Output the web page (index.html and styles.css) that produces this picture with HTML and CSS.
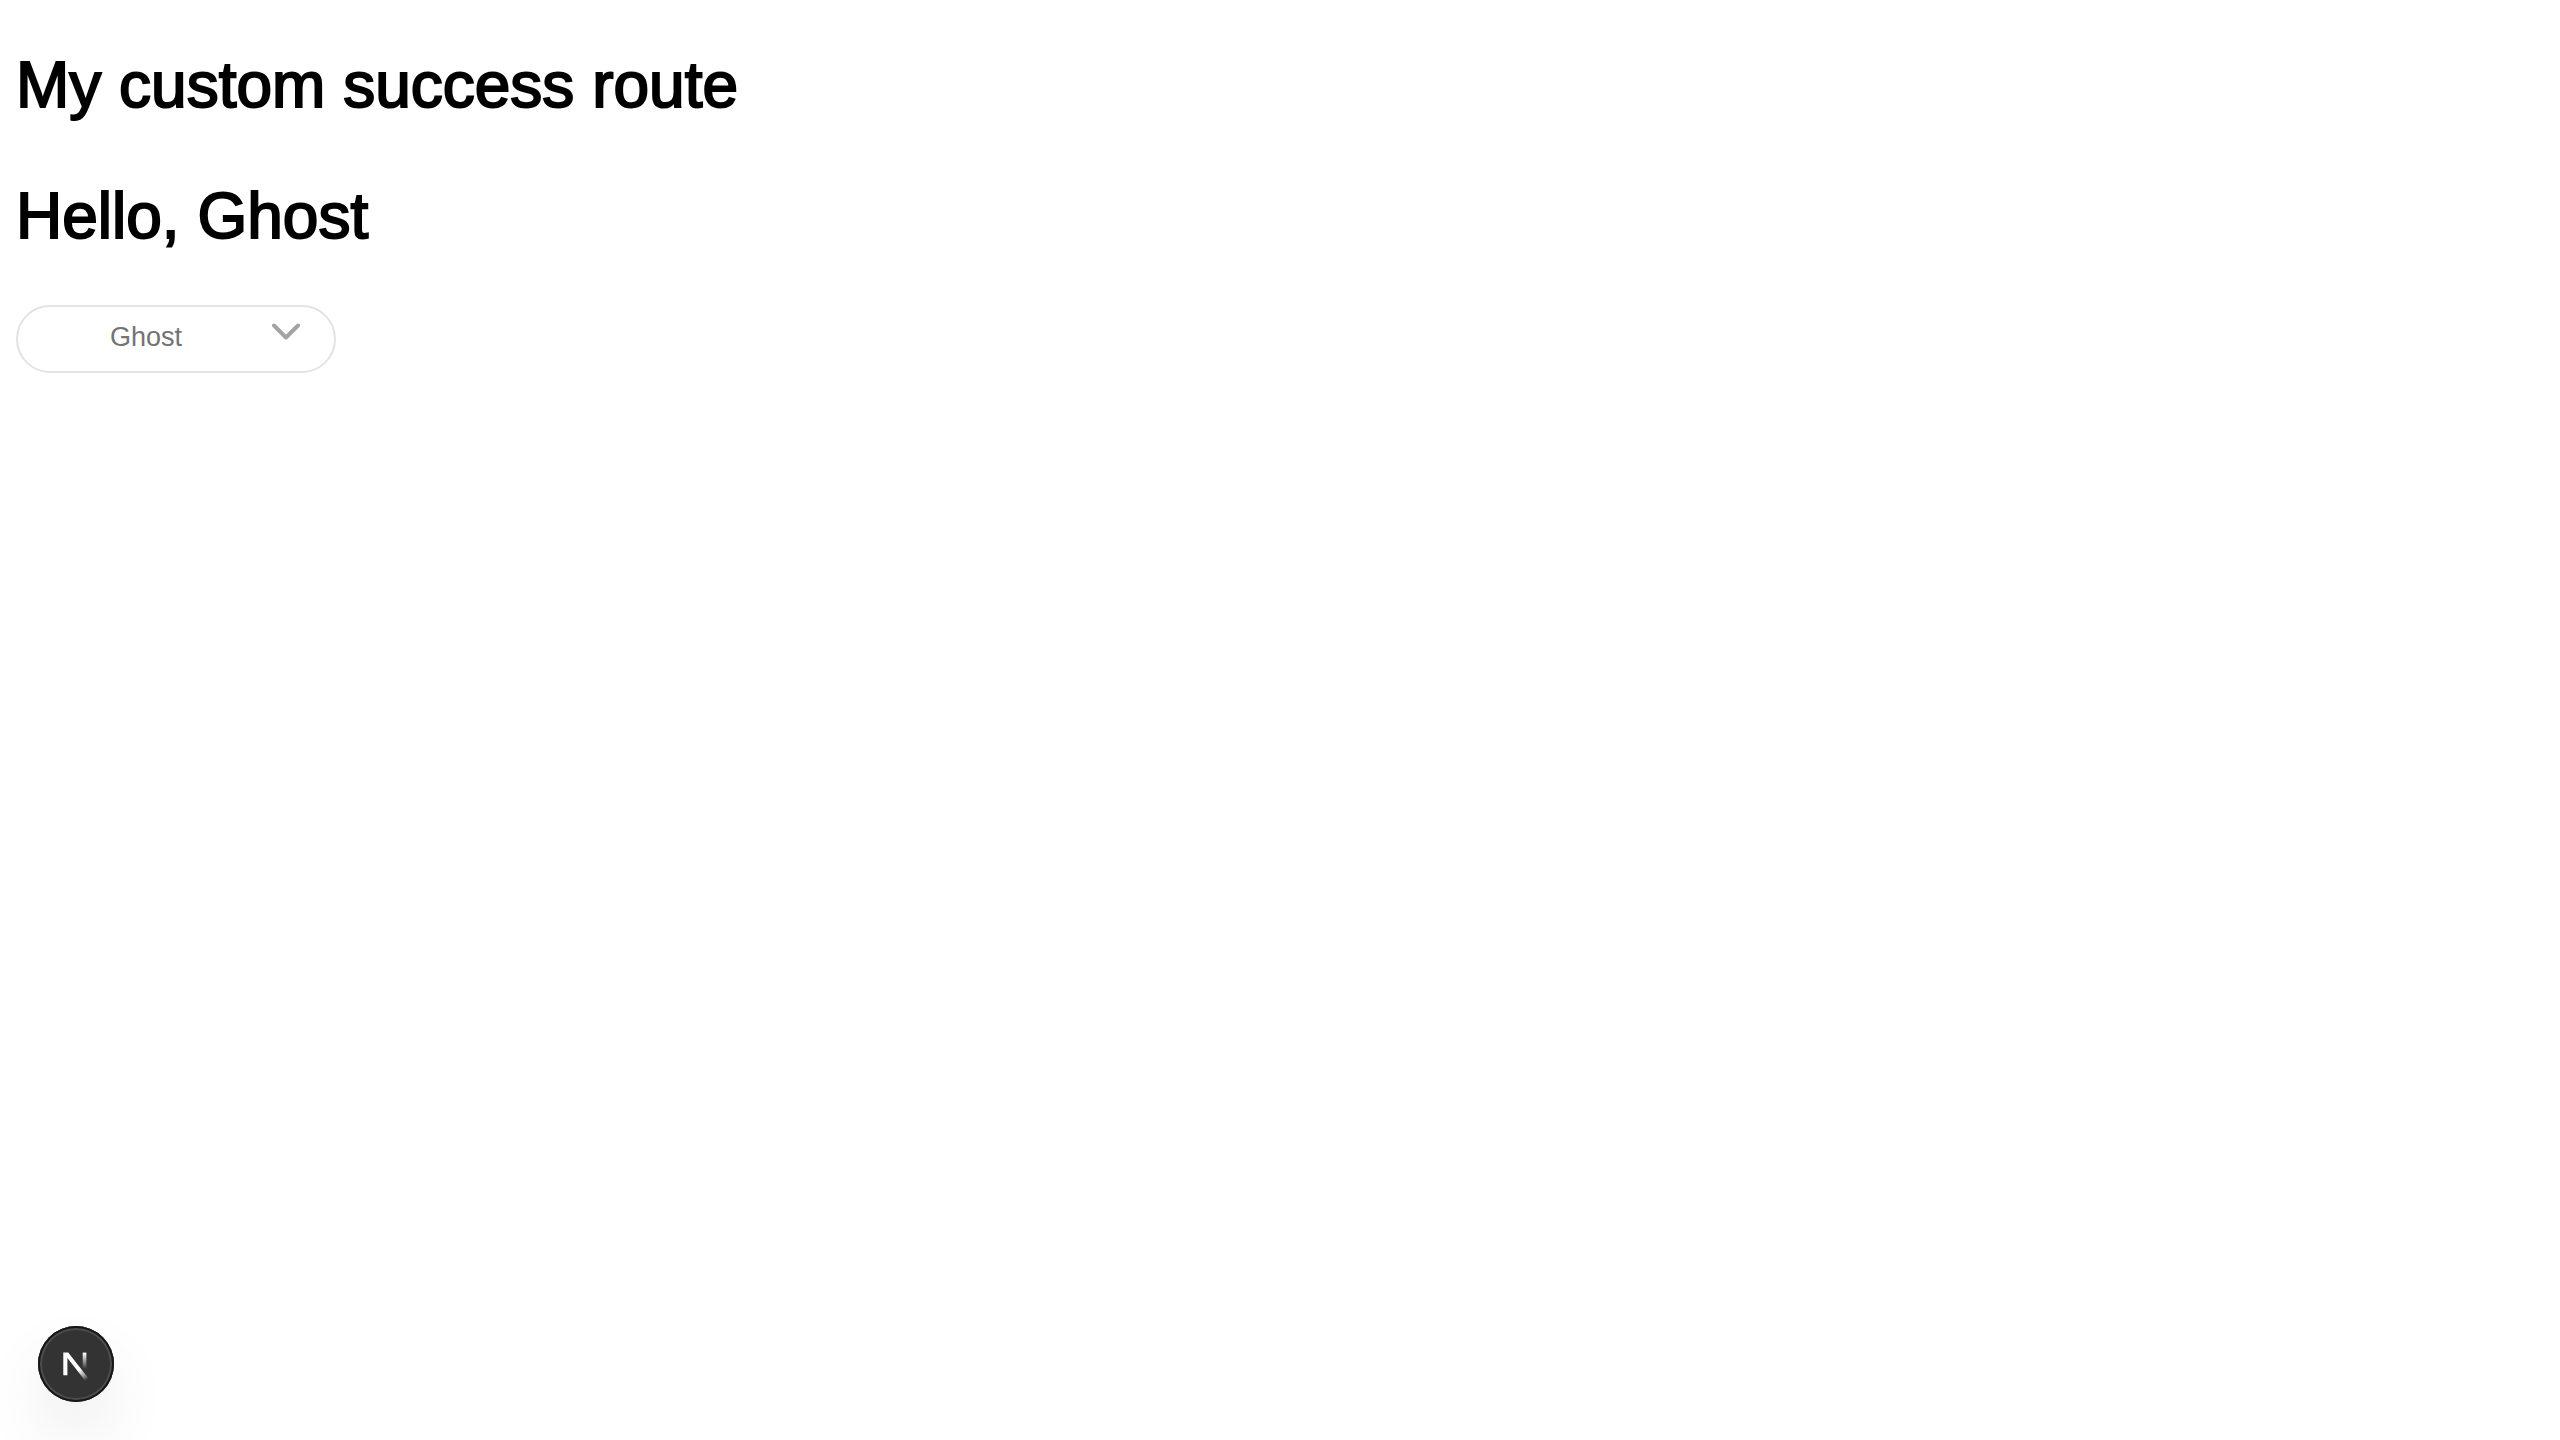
FILE: index.html
```html
<!DOCTYPE html>
<html lang="en">
<head>
<meta charset="utf-8">
<meta name="viewport" content="width=device-width, initial-scale=1">
<title>My custom success route</title>
<link rel="stylesheet" href="styles.css">
</head>
<body>
<main class="page">
  <h1 class="title">My custom success route</h1>
  <h1 class="title">Hello, Ghost</h1>
  <div class="picker">
    <select class="picker-select" aria-label="Account">
      <option>Ghost</option>
    </select>
    <svg class="picker-chevron" width="28" height="18" viewBox="0 0 28 18" fill="none" aria-hidden="true">
      <path d="M2 2.5 14 14.5 26 2.5" stroke="#a3a3a3" stroke-width="4" stroke-linecap="round" stroke-linejoin="round"/>
    </svg>
  </div>
</main>
<button class="dev-badge" type="button" aria-label="Open developer tools">
  <svg width="76" height="76" viewBox="0 0 76 76" fill="none" aria-hidden="true">
    <defs>
      <linearGradient id="diagonal" gradientUnits="userSpaceOnUse" x1="41" y1="44" x2="48.5" y2="54">
        <stop stop-color="#fff"/>
        <stop offset="0.604" stop-color="#fff" stop-opacity="0.5"/>
        <stop offset="1" stop-color="#fff" stop-opacity="0"/>
      </linearGradient>
      <linearGradient id="stem" gradientUnits="userSpaceOnUse" x1="46" y1="27" x2="46" y2="43">
        <stop stop-color="#fff"/>
        <stop offset="1" stop-color="#fff" stop-opacity="0"/>
      </linearGradient>
    </defs>
    <path d="M25.3 26.6h4.9L50.6 52.4l-3.2 2.5L29.4 32v17.2h-4.1z" fill="url(#diagonal)"/>
    <path d="M44.7 26.6h3.7v17h-3.7z" fill="url(#stem)"/>
  </svg>
</button>
</body>
</html>
```
FILE: styles.css
```css
body {
  margin: 0;
  padding: 0 16px;
  background: #fff;
  color: #000;
  font-family: "Liberation Sans", Arial, sans-serif;
}

.page {
  display: flex;
  flex-direction: column;
  align-items: flex-start;
  padding-top: 48px;
}

.title {
  margin: 0 0 56px;
  font-size: 64px;
  line-height: 75px;
  font-weight: 400;
  -webkit-text-stroke: 2px #000;
}

.title:nth-of-type(2) {
  margin-bottom: 51px;
}

.picker {
  position: relative;
  width: 320px;
  max-width: 100%;
}

.picker-select {
  appearance: none;
  display: block;
  box-sizing: border-box;
  width: 100%;
  height: 68px;
  padding: 0 72px 4px 92px;
  border: 2px solid #e3e3e3;
  border-radius: 34px;
  background: #fff;
  color: #737373;
  font: inherit;
  font-size: 27px;
}

.picker-chevron {
  position: absolute;
  top: 18px;
  right: 36px;
  pointer-events: none;
}

.dev-badge {
  position: fixed;
  left: 38px;
  bottom: 38px;
  width: 76px;
  height: 76px;
  padding: 0;
  border: 0;
  border-radius: 50%;
  background: #333;
  box-shadow:
    inset 0 0 0 2px #171717,
    inset 0 0 0 4px #4c4c4c,
    0 32px 64px rgba(0, 0, 0, 0.08);
}

.dev-badge svg {
  display: block;
}
```
